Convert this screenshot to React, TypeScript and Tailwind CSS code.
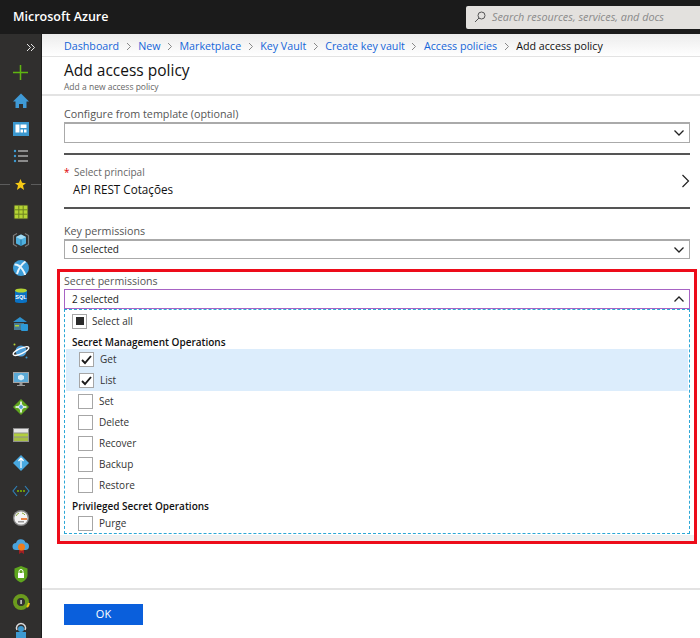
import React from "react";

const F = "font-['Open_Sans','Noto_Sans',sans-serif]";

const Chevron = ({ up = false }: { up?: boolean }) => (
  <svg width="12" height="8" viewBox="0 0 12 8" fill="none" stroke="#222" strokeWidth="1.3">
    <path d={up ? "M1.5 6.5 6 2l4.5 4.5" : "M1.5 1.5 6 6l4.5-4.5"} />
  </svg>
);

const Icon = ({ children }: { children: React.ReactNode }) => (
  <div className="h-[27.85px] shrink-0 flex items-center justify-center w-full pl-[1px]">
    <svg width="18" height="18" viewBox="0 0 18 18">{children}</svg>
  </div>
);

const icons: React.ReactNode[] = [
  <path key="a" d="M8.5 1v15M1 8.5h15" stroke="#5fb611" strokeWidth="1.5" fill="none" />,
  <path key="b" d="M9 1.500 1 9.500h2.500V16H7v-4h4v4h3.500V9.500H17z" fill="#3f9ad6" />,
  <g key="c"><rect x="1" y="2" width="16" height="14" fill="#3b98cf" /><rect x="3.500" y="4.500" width="4" height="8" fill="#fff" /><rect x="8.500" y="4.500" width="6" height="3.500" fill="#fff" /><rect x="8.500" y="9.500" width="2.500" height="3" fill="#fff" /><rect x="12" y="9.500" width="2.500" height="3" fill="#fff" /></g>,
  <g key="d" fill="#8b8b8b"><rect x="6" y="3" width="10" height="2" /><rect x="6" y="8" width="10" height="2" /><rect x="6" y="13" width="10" height="2" /><circle cx="3" cy="4" r="1.200" fill="#3d9ad1" /><circle cx="3" cy="9" r="1.200" fill="#3d9ad1" /><circle cx="3" cy="14" r="1.200" fill="#3d9ad1" /></g>,
];
const icons2: React.ReactNode[] = [
  <g key="e"><rect x="1.500" y="1.500" width="15" height="15" fill="#3a3a2a" /><rect x="2.500" y="2.500" width="13" height="13" fill="#b4d334" /><path d="M6.800 2.500v13M11.200 2.500v13M2.500 6.800h13M2.500 11.200h13" stroke="#6d8320" /></g>,
  <g key="f"><path d="M9 3.500 14 6v6.500L9 15l-5-2.500V6z" fill="#4fb0de" /><path d="M4 6l5 2.500L14 6 9 3.500z" fill="#a4dcf4" /><path d="M9 8.500V15" stroke="#1f6d9d" /><path d="M5 2.500 1.500 4.500v9L5 15.500M13 2.500l3.500 2v9L13 15.500" stroke="#7c7c7c" strokeWidth="1.200" fill="none" /></g>,
  <g key="g"><circle cx="9" cy="9" r="8" fill="#3c9dd8" /><path d="M2.500 5.500c3.500 0 6 2 8 5s2.500 4 2.500 5.500M13.500 2.500C10.500 4.500 7 8 5 15" stroke="#e8f4fb" strokeWidth="2" fill="none" /></g>,
  <g key="h"><path d="M3 3.500v11c0 2 12 2 12 0v-11z" fill="#0a72c4" /><ellipse cx="9" cy="3.500" rx="6" ry="2" fill="#b2d334" /><text x="9" y="12" textAnchor="middle" fontSize="5.500" fontWeight="700" fill="#fff" fontFamily="Liberation Sans">SQL</text></g>,
  <g key="i"><path d="M1 7 8 2l7 5z" fill="#2f92cf" /><rect x="2" y="8" width="10" height="7" fill="#4a7d93" /><rect x="9" y="9" width="7" height="7" rx="1" fill="#2d9ad8" /><rect x="3" y="10" width="4" height="1.500" fill="#b2d334" /></g>,
  <g key="j"><circle cx="9" cy="9" r="5.500" fill="#4f9fd8" /><ellipse cx="9" cy="9" rx="8.500" ry="2.600" transform="rotate(-25 9 9)" fill="none" stroke="#fff" strokeWidth="1.300" /><circle cx="2.500" cy="2.500" r="1" fill="#b4d334" /><circle cx="14.500" cy="15.500" r="1" fill="#3d9ad1" /></g>,
  <g key="k"><rect x="1" y="2" width="16" height="11" fill="#a5a5a5" /><rect x="2" y="3" width="14" height="9" fill="#5aa9d6" /><path d="M9 4.500 12 6v3l-3 1.500L6 9V6z" fill="#d8eef9" /><rect x="7.500" y="13" width="3" height="2" fill="#999" /><rect x="5" y="15" width="8" height="1" fill="#999" /></g>,
  <g key="l"><path d="M9 1 17 9l-8 8-8-8z" fill="#5fa51e" /><path d="M9 3.500v11M3.500 9h11" stroke="#fff" strokeWidth="1.600" /><circle cx="9" cy="9" r="2.400" fill="#4f9fd8" stroke="#fff" strokeWidth=".8" /></g>,
  <g key="m"><rect x="1" y="2" width="16" height="14" fill="#8f8f8f" /><rect x="2" y="3" width="14" height="3.500" fill="#e6e6e6" /><rect x="2" y="7.500" width="14" height="3" fill="#b2cf3d" /><rect x="2" y="11.500" width="14" height="3.500" fill="#a7bf45" /></g>,
  <g key="n"><path d="M9 1 17 9l-8 8-8-8z" fill="#49a9e0" /><path d="M9 4v10M9 4 6.500 7M9 4l2.500 3" stroke="#fff" strokeWidth="1.200" fill="none" /></g>,
  <g key="o"><path d="M5 4 1 9l4 5M13 4l4 5-4 5" stroke="#2f7fb5" strokeWidth="1.200" fill="none" /><circle cx="6" cy="9" r="1" fill="#7fba00" /><circle cx="9" cy="9" r="1" fill="#7fba00" /><circle cx="12" cy="9" r="1" fill="#7fba00" /></g>,
  <g key="p"><circle cx="9" cy="9" r="8" fill="#8a8a8a" /><circle cx="9" cy="9" r="6.600" fill="#f4f4f4" /><path d="M9 10h6" stroke="#e8681d" strokeWidth="1.600" /><path d="M4 7a6 6 0 0 1 3-3M10 4a5 5 0 0 1 3 2" stroke="#8aa83b" fill="none" /><rect x="6" y="12" width="6" height="1.500" fill="#999" /></g>,
  <g key="q"><path d="M4 13a3.500 3.500 0 0 1 0-7 5 5 0 0 1 9.500-.5A3.800 3.800 0 0 1 14 13z" fill="#4aa3dc" /><path d="M7 12v5l2.500-1.500L12 17v-5z" fill="#a01f24" /><circle cx="9.500" cy="10" r="3.500" fill="#ee7d1f" /></g>,
  <g key="r"><path d="M9 1 15.500 3.500V10c0 3.500-3 6-6.500 7.500C5.500 16 2.500 13.500 2.500 10V3.500z" fill="#5ea51e" /><rect x="6" y="8" width="6" height="5" fill="#fff" /><path d="M7 8V6.500a2 2 0 0 1 4 0V8" stroke="#fff" fill="none" /></g>,
  <g key="s"><circle cx="9" cy="9" r="6" fill="none" stroke="#6b9b1e" strokeWidth="4" /><path d="M15 14a8 8 0 0 0 2-4" fill="none" stroke="#f2c811" strokeWidth="2" /><circle cx="9" cy="9" r="3.500" fill="#333" /><rect x="8.400" y="7" width="1.400" height="4" fill="#ddd" /></g>,
  <g key="t"><path d="M5 9a4.500 4.500 0 1 1 8 0" fill="none" stroke="#ddd" strokeWidth="1.500" /><circle cx="9" cy="8" r="3" fill="#3d9ad1" /><rect x="4" y="11" width="10" height="7" fill="#3d9ad1" /></g>,
];

const Row = ({ label, checked = false, short = false }: { label: string; checked?: boolean; short?: boolean }) => (
  <div className={`${short ? "h-[15px]" : "h-[21px]"} flex items-center pl-[13px] gap-[6px] ${checked ? "bg-[#dcedfc] ml-[1px] pl-[12px] mr-[1px]" : ""}`}>
    <div className="w-[15px] h-[15px] border border-[#a6a6a6] bg-white flex items-center justify-center shrink-0">
      {checked && (
        <svg width="11" height="10" viewBox="0 0 11 10" fill="none" stroke="#1a1a1a" strokeWidth="1.900"><path d="M1 5l3 3 6-7" /></svg>
      )}
    </div>
    <span className="text-[10px] text-[#333]">{label}</span>
  </div>
);

const Select = ({ text, up = false, cls = "" }: { text: string; up?: boolean; cls?: string }) => (
  <div className={`border flex items-center justify-between pl-[7px] pr-[4px] ${cls}`}>
    <span className="text-[10px] text-[#222]">{text}</span>
    <Chevron up={up} />
  </div>
);

const Crumb = ({ t, last = false }: { t: string; last?: boolean }) => (
  <>
    <span className={last ? "text-[#111]" : "text-[#1565d8]"}>{t}</span>
    {!last && (
      <svg width="6" height="9" viewBox="0 0 6 9" fill="none" stroke="#888" className="mx-[6.500px]"><path d="M1 1l3.500 3.500L1 8" /></svg>
    )}
  </>
);

export default function App() {
  return (
    <div className={`w-[700px] h-[638px] overflow-hidden flex flex-col bg-white ${F}`}>
      <header className="h-[34px] shrink-0 bg-[#1b1b1b] flex items-center justify-between pl-[13px]">
        <span className="text-white text-[12.500px] font-semibold">Microsoft Azure</span>
        <div className="w-[234px] h-[23px] bg-[#e3e1de] rounded-l-[2px] flex items-center pl-[8px] gap-[6px]">
          <svg width="12" height="12" viewBox="0 0 12 12" fill="none" stroke="#555" strokeWidth="1"><circle cx="7.500" cy="4.500" r="3.500" /><path d="M5 7 1 11" /></svg>
          <span className="text-[10.800px] italic text-[#8a8a8a] whitespace-nowrap">Search resources, services, and docs</span>
        </div>
      </header>
      <div className="flex flex-1 min-h-0">
        <aside className="w-[42px] shrink-0 bg-[#302f2e] border-r border-[#1c1c1c] flex flex-col items-center overflow-hidden">
          <div className="h-[25px] w-full shrink-0 flex items-center justify-end pr-[6px] pt-[2px]">
            <svg width="9" height="9" viewBox="0 0 9 9" fill="none" stroke="#e5e5e5" strokeWidth="1"><path d="M1 1l3.500 3.500L1 8M5 1l3.500 3.500L5 8" /></svg>
          </div>
          {icons.map((c, i) => <Icon key={i}>{c}</Icon>)}
          <div className="h-[27.850px] w-full shrink-0 flex items-center gap-[5px]">
            <div className="h-px flex-1 bg-[#5c5c5c]" />
            <svg width="11" height="11" viewBox="0 0 20 20"><path d="M10 0l3 7 7 .5-5.500 4.500 2 8L10 15.500 3.500 20l2-8L0 7.500 7 7z" fill="#f6c915" /></svg>
            <div className="h-px flex-1 bg-[#5c5c5c]" />
          </div>
          {icons2.map((c, i) => <Icon key={i}>{c}</Icon>)}
        </aside>
        <main className="flex-1 min-w-0 flex flex-col">
          <nav className="h-[23px] shrink-0 bg-gradient-to-b from-[#ececec] to-white border-b border-[#e3e3e3] flex items-center pl-[22px] pt-[2px] text-[10.700px] whitespace-nowrap">
            <Crumb t="Dashboard" /><Crumb t="New" /><Crumb t="Marketplace" /><Crumb t="Key Vault" /><Crumb t="Create key vault" /><Crumb t="Access policies" /><Crumb t="Add access policy" last />
          </nav>
          <div className="h-[39px] shrink-0 border-b-2 border-[#e3e3e3] pl-[22px] pt-[4px]">
            <h1 className="text-[15.500px] leading-[18px] font-normal text-[#111]">Add access policy</h1>
            <p className="mt-[3px] text-[8.500px] leading-[10px] text-[#666]">Add a new access policy</p>
          </div>
          <div className="flex-1 min-h-0 flex flex-col">
            <div className="pl-[22px] pr-[10px] pt-[10px]">
              <div className="text-[10.750px] leading-[16px] text-[#555]">Configure from template (optional)</div>
              <Select text="" cls="h-[21px] border-[#aaa] border-t-2" />
              <div className="mt-[10px] border-t-2 border-[#555] h-[54px] flex items-center justify-between">
                <div>
                  <div className="text-[10px] leading-[16px] text-[#666]"><span className="text-[#d00] mr-[2px]">*</span> Select principal</div>
                  <div className="pl-[9px] text-[11.700px] leading-[19px] text-[#111]">API REST Cotações</div>
                </div>
                <svg width="9" height="14" viewBox="0 0 9 14" fill="none" stroke="#222" strokeWidth="1.200"><path d="M1.500 1l6 6-6 6" /></svg>
              </div>
              <div className="border-t-2 border-[#555] pt-[15px]">
                <div className="text-[10.700px] leading-[15px] text-[#555]">Key permissions</div>
                <Select text="0 selected" cls="h-[20px] border-[#aaa] border-t-2" />
              </div>
            </div>
            <section className="mt-[10px] ml-[15px] mr-[3px] h-[275px] shrink-0 border-[3px] border-[#ed0c1a] pl-[4px] pr-[4px] pt-[2px] shadow-[inset_0_-6px_0_#f0f0f0]">
              <div className="text-[10.600px] leading-[15px] text-[#555]">Secret permissions</div>
              <Select text="2 selected" up cls="h-[20px] border-[#a763c4]" />
              <div className="h-[225px] border border-dashed border-[#2ba7d6] bg-white">
                <div className="h-[22px] flex items-center pl-[7px] gap-[5px]">
                  <div className="w-[15px] h-[15px] border border-[#a6a6a6] flex items-center justify-center">
                    <div className="w-[8px] h-[8px] bg-[#2b2b2b]" />
                  </div>
                  <span className="text-[10px] text-[#333]">Select all</span>
                </div>
                <div className="h-[17px] flex items-center pl-[7px] pt-[3px] text-[10px] font-semibold text-[#111]">Secret Management Operations</div>
                <Row label="Get" checked />
                <Row label="List" checked />
                <Row label="Set" />
                <Row label="Delete" />
                <Row label="Recover" />
                <Row label="Backup" />
                <Row label="Restore" />
                <div className="h-[20px] flex items-center pl-[7px] text-[10px] font-semibold text-[#111]">Privileged Secret Operations</div>
                <Row label="Purge" short />
              </div>
            </section>
            <div className="mt-[44px] border-t-2 border-[#e3e3e3] pl-[22px] pt-[14px]">
              <button className="w-[79px] h-[21px] bg-[#0a5fdc] text-white text-[11px] flex items-center justify-center">OK</button>
            </div>
          </div>
        </main>
      </div>
    </div>
  );
}
